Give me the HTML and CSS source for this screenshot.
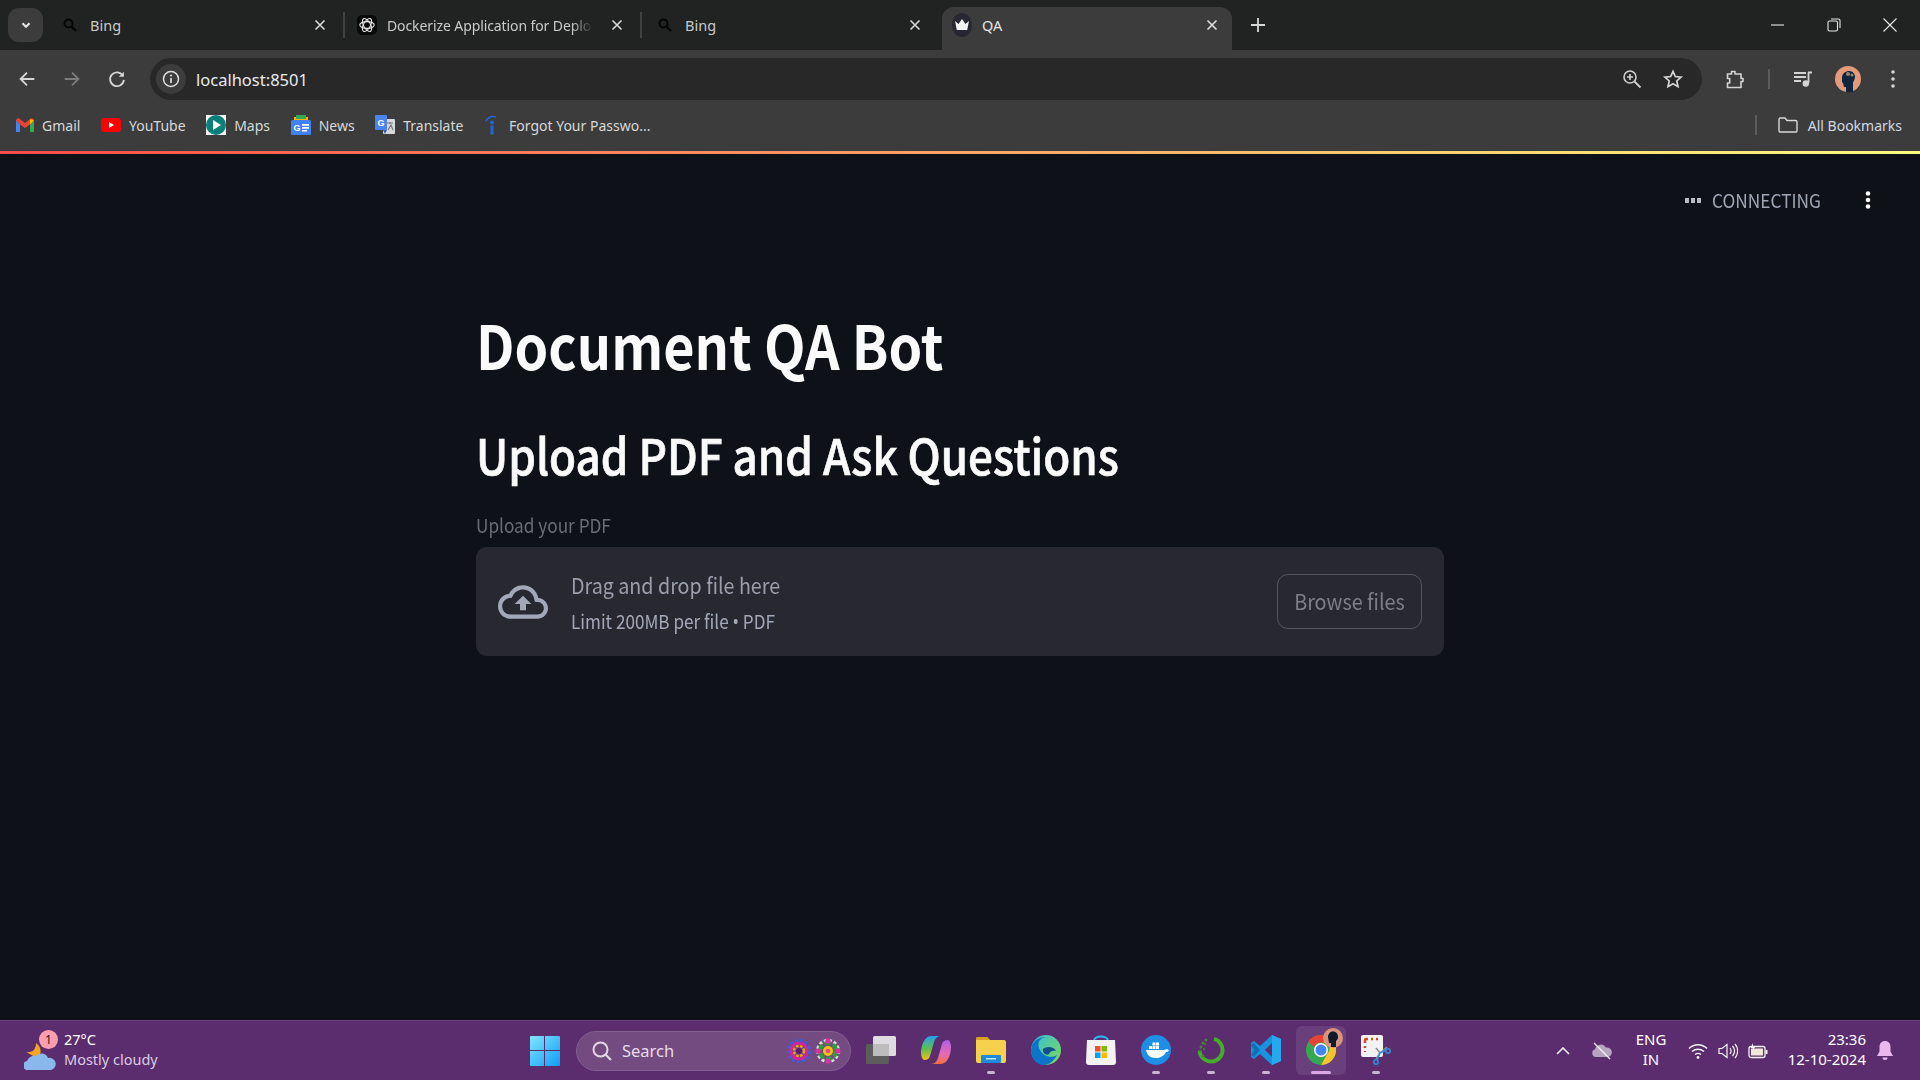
FILE: index.html
```html
<!DOCTYPE html>
<html lang="en">
<head>
<meta charset="utf-8">
<title>QA</title>
<link rel="stylesheet" href="styles.css">
</head>
<body>
<header class="chrome">
  <div class="tabstrip">
    <button class="tab-search"><svg width="14" height="14" viewBox="0 0 24 24"><path d="M6 9l6 6 6-6" fill="none" stroke="#e8e8e8" stroke-width="3.4"/></svg></button>
    <div class="tab tab-sep">
      <svg class="fav" viewBox="0 0 16 16"><circle cx="6.500" cy="6.500" r="4" fill="none" stroke="#050505" stroke-width="2"/><path d="M9.500 9.500l4.500 4.500" stroke="#050505" stroke-width="2.200"/></svg>
      <span class="tab-title">Bing</span>
      <svg class="tab-x" viewBox="0 0 12 12"><path d="M1.500 1.500l9 9M10.500 1.500l-9 9" stroke="#d8d8d8" stroke-width="1.600"/></svg>
    </div>
    <div class="tab tab-sep">
      <svg class="fav fav-ai" viewBox="0 0 20 20"><rect width="20" height="20" rx="5" fill="#0a0a0a"/><g fill="none" stroke="#e8e8e8" stroke-width="1.100"><ellipse cx="10" cy="10" rx="7.200" ry="3.400"/><ellipse cx="10" cy="10" rx="7.200" ry="3.400" transform="rotate(60 10 10)"/><ellipse cx="10" cy="10" rx="7.200" ry="3.400" transform="rotate(120 10 10)"/></g></svg>
      <span class="tab-title tab-fade">Dockerize Application for Deplo</span>
      <svg class="tab-x" viewBox="0 0 12 12"><path d="M1.500 1.500l9 9M10.500 1.500l-9 9" stroke="#d8d8d8" stroke-width="1.600"/></svg>
    </div>
    <div class="tab tab-third">
      <svg class="fav" viewBox="0 0 16 16"><circle cx="6.500" cy="6.500" r="4" fill="none" stroke="#050505" stroke-width="2"/><path d="M9.500 9.500l4.500 4.500" stroke="#050505" stroke-width="2.200"/></svg>
      <span class="tab-title">Bing</span>
      <svg class="tab-x" viewBox="0 0 12 12"><path d="M1.500 1.500l9 9M10.500 1.500l-9 9" stroke="#d8d8d8" stroke-width="1.600"/></svg>
    </div>
    <div class="tab tab-active">
      <span class="crown"><svg width="16" height="14" viewBox="0 0 16 14"><path d="M1 3l3.500 3L8 1l3.500 5L15 3l-1.800 9H2.800z" fill="#f2f2f2"/></svg></span>
      <span class="tab-title">QA</span>
      <svg class="tab-x" viewBox="0 0 12 12"><path d="M1.500 1.500l9 9M10.500 1.500l-9 9" stroke="#e0e0e0" stroke-width="1.600"/></svg>
    </div>
    <svg class="new-tab" width="14" height="14" viewBox="0 0 14 14"><path d="M7 0v14M0 7h14" stroke="#d8d8d8" stroke-width="1.800"/></svg>
    <div class="win-controls">
      <svg width="14" height="14" viewBox="0 0 14 14"><path d="M0 7h13" stroke="#e8e8e8" stroke-width="1.100"/></svg>
      <svg width="14" height="14" viewBox="0 0 14 14"><rect x="1" y="3" width="9.500" height="10" rx="1.500" fill="none" stroke="#e8e8e8" stroke-width="1.100"/><path d="M4 1h7.500a1.500 1.500 0 0 1 1.500 1.500V10" fill="none" stroke="#e8e8e8" stroke-width="1.100"/></svg>
      <svg width="14" height="14" viewBox="0 0 14 14"><path d="M.5.500l13 13M13.500.500l-13 13" stroke="#e8e8e8" stroke-width="1.100"/></svg>
    </div>
  </div>
  <div class="toolbar">
    <div class="nav-buttons">
      <svg width="22" height="22" viewBox="0 0 24 24"><path d="M20 12H5M12 5l-7 7 7 7" fill="none" stroke="#d6d6d6" stroke-width="2"/></svg>
      <svg width="22" height="22" viewBox="0 0 24 24"><path d="M4 12h15M12 5l7 7-7 7" fill="none" stroke="#7c7c7c" stroke-width="2"/></svg>
      <svg width="22" height="22" viewBox="0 0 24 24"><path d="M18.500 8.500A7.500 7.500 0 1 0 19.500 13" fill="none" stroke="#d6d6d6" stroke-width="2"/><path d="M19.500 4v5.500H14z" fill="#d6d6d6"/></svg>
    </div>
    <div class="omnibox">
      <span class="info-chip"><svg width="18" height="18" viewBox="0 0 18 18"><circle cx="9" cy="9" r="7.500" fill="none" stroke="#e0e0e0" stroke-width="1.500"/><path d="M9 8v5" stroke="#e0e0e0" stroke-width="1.700"/><circle cx="9" cy="5.500" r="1.100" fill="#e0e0e0"/></svg></span>
      <span class="url">localhost:8501</span>
      <svg class="omni-zoom" width="20" height="20" viewBox="0 0 20 20"><circle cx="8" cy="8" r="6" fill="none" stroke="#d0d0d0" stroke-width="1.600"/><path d="M12.500 12.500L18.500 18.500" stroke="#d0d0d0" stroke-width="1.800"/><path d="M8 5v6M5 8h6" stroke="#d0d0d0" stroke-width="1.600"/></svg>
      <svg class="omni-star" width="20" height="20" viewBox="0 0 24 24"><path d="M12 2.800l2.800 6.300 6.900.7-5.200 4.600 1.500 6.800-6-3.500-6 3.500 1.500-6.800-5.200-4.600 6.900-.7z" fill="none" stroke="#d8d8d8" stroke-width="2"/></svg>
    </div>
    <div class="tool-actions">
      <svg class="act-ext" width="20" height="20" viewBox="0 0 20 20"><path d="M2.500 5h4V2.500h3.500V5h6v4.500h2v3h-2V18.500H2.500V14h2.200v-4.500H2.500z" fill="none" stroke="#d4d4d4" stroke-width="1.600" stroke-linejoin="round"/></svg>
      <span class="tool-sep"></span>
      <svg class="act-media" width="20" height="20" viewBox="0 0 20 20"><path d="M1 4h12M1 8h12M1 12h7" stroke="#d4d4d4" stroke-width="1.800"/><path d="M15 3.500h4M15.500 3.500V14" stroke="#d4d4d4" stroke-width="1.800"/><circle cx="12.800" cy="14.500" r="3.200" fill="#d4d4d4"/></svg>
      <svg class="act-avatar" width="26" height="26" viewBox="0 0 26 26"><circle cx="13" cy="13" r="13" fill="#e59a7c"/><path d="M7 12c0-5 4-7 7-7 4 0 6 3 6 6 0 3-2 4-2 6v9H11v-5H9.500c-1 0-1-2-1-3L7 16z" fill="#10263f"/><circle cx="13" cy="8" r="2" fill="#98866f"/><circle cx="17" cy="9" r="1.500" fill="#98866f"/></svg>
      <svg class="act-dots" width="4" height="18" viewBox="0 0 4 18"><circle cx="2" cy="2" r="1.800" fill="#d4d4d4"/><circle cx="2" cy="9" r="1.800" fill="#d4d4d4"/><circle cx="2" cy="16" r="1.800" fill="#d4d4d4"/></svg>
    </div>
  </div>
  <nav class="bookmarks">
    <a class="bm"><svg width="18" height="14" viewBox="0 0 18 14"><path d="M0 2.500V14h4V6.500z" fill="#4285f4"/><path d="M14 14h4V2.500L14 6.500z" fill="#34a853"/><path d="M0 2.500C0 .5 2 -.5 3.500 .7L9 5l5.500-4.300C16 -.5 18 .5 18 2.500L14 6.500 9 10 4 6.500z" fill="#ea4335"/><path d="M14 .9l4 1.600L14 6.500z" fill="#fbbc04"/></svg>Gmail</a>
    <a class="bm"><svg width="20" height="14" viewBox="0 0 20 14"><rect width="20" height="14" rx="3.500" fill="#f00"/><path d="M8 4l5 3-5 3z" fill="#fff"/></svg>YouTube</a>
    <a class="bm"><svg width="20" height="20" viewBox="0 0 20 20"><rect width="20" height="20" fill="#f2f2f2"/><circle cx="10" cy="10" r="10" fill="#0b8079"/><path d="M7 5l8 5-8 5z" fill="#fff"/></svg>Maps</a>
    <a class="bm"><svg width="20" height="20" viewBox="0 0 20 20"><path d="M3 2h14v6H3z" fill="#f5b400"/><path d="M5 0h10v4H5z" fill="#34a853"/><rect y="5" width="20" height="15" rx="1.500" fill="#3f82f0"/><text x="2.500" y="16" class="bm-mini">G</text><path d="M11 9h7v1.800h-7zM11 12h7v1.800h-7zM11 15h5v1.500h-5z" fill="#fff"/></svg>News</a>
    <a class="bm"><svg width="20" height="20" viewBox="0 0 20 20"><rect x="8" y="4" width="12" height="15" rx="1" fill="#d8d8d8"/><rect width="12" height="15" rx="1" fill="#4a85ee"/><path d="M8 15l2 4 2-4z" fill="#2a5fc0"/><text x="2.500" y="11" class="bm-mini">G</text><path d="M12 8h6M15 7v2M13 15l3-5 2 5" fill="none" stroke="#777" stroke-width="1.200"/></svg>Translate</a>
    <a class="bm bm-forgot"><svg width="16" height="20" viewBox="0 0 16 20"><path d="M2 6c2-4 6-5 10-4" fill="none" stroke="#1f66d8" stroke-width="1.500"/><circle cx="8" cy="7.500" r="2" fill="#1f66d8"/><rect x="6.500" y="10.500" width="3" height="9" fill="#1f66d8"/></svg>Forgot Your Passwo...</a>
    <span class="bm-sep"></span>
    <a class="bm bm-all"><svg width="20" height="16" viewBox="0 0 20 16"><path d="M1 2.500A1.500 1.500 0 0 1 2.500 1H7l2 2.500h8.500A1.500 1.500 0 0 1 19 5v9a1 1 0 0 1-1 1H2a1 1 0 0 1-1-1z" fill="none" stroke="#d8d8d8" stroke-width="1.400"/></svg>All Bookmarks</a>
  </nav>
  <div class="decoration"></div>
</header>

<main class="app">
  <div class="status-bar">
    <svg class="status-dots" width="16" height="5" viewBox="0 0 16 5"><rect width="4" height="5" fill="#b9bcc4"/><rect x="6" width="4" height="5" fill="#b9bcc4"/><rect x="12" width="4" height="5" fill="#b9bcc4"/></svg>
    <span class="status-text">CONNECTING</span>
    <svg class="status-menu" width="6" height="18" viewBox="0 0 6 18"><circle cx="3" cy="2.500" r="2.300" fill="#fafafa"/><circle cx="3" cy="9" r="2.300" fill="#fafafa"/><circle cx="3" cy="15.500" r="2.300" fill="#fafafa"/></svg>
  </div>
  <section class="content">
    <h1>Document QA Bot</h1>
    <h2>Upload PDF and Ask Questions</h2>
    <label class="upload-label">Upload your PDF</label>
    <div class="dropzone">
      <svg class="cloud" width="50" height="50" viewBox="0 0 24 24"><path fill="#a3a8b8" d="M19.350 10.040C18.670 6.590 15.640 4 12 4 9.110 4 6.600 5.640 5.350 8.040 2.340 8.360 0 10.910 0 14c0 3.310 2.690 6 6 6h13c2.760 0 5-2.240 5-5 0-2.640-2.050-4.780-4.650-4.960zM19 18H6c-2.210 0-4-1.790-4-4 0-2.050 1.530-3.760 3.560-3.970l1.070-.11.5-.95C8.080 7.140 9.940 6 12 6c2.620 0 4.880 1.860 5.390 4.430l.3 1.500 1.530.11c1.560.1 2.780 1.410 2.780 2.960 0 1.650-1.350 3-3 3zM8 13h2.550v3h2.900v-3H16l-4-4z"/></svg>
      <div class="drop-text">
        <span class="drop-main">Drag and drop file here</span>
        <small class="drop-limit">Limit 200MB per file <span class="bullet">•</span> PDF</small>
      </div>
      <button class="browse"><span class="browse-label">Browse files</span></button>
    </div>
  </section>
</main>

<footer class="taskbar">
  <div class="weather">
    <span class="weather-icon">
      <svg width="32" height="34" viewBox="0 0 32 34"><path d="M2 16c6 1 10-2 10-9 6 4 6 12 1 15z" fill="#f4a623"/><path d="M4 34a4.500 4.500 0 0 1-1-9 8 8 0 0 1 9-5 7 7 0 0 1 12 2 6 6 0 0 1 3 12z" fill="#8ab8ec"/></svg>
      <span class="weather-badge">1</span>
    </span>
    <div class="weather-text"><span class="temp">27°C</span><span class="sky">Mostly cloudy</span></div>
  </div>
  <div class="apps">
    <svg class="start" width="30" height="30" viewBox="0 0 30 30"><defs><linearGradient id="w" x1="0" y1="0" x2="1" y2="1"><stop offset="0" stop-color="#7fe6ff"/><stop offset="1" stop-color="#0f9cf5"/></linearGradient></defs><path fill="url(#w)" d="M1 0h13v14H0V1a1 1 0 0 1 1-1zM15 0h14a1 1 0 0 1 1 1v13H15zM0 15h14v15H1a1 1 0 0 1-1-1zM15 15h15v14a1 1 0 0 1-1 1H15z"/></svg>
    <div class="searchbox">
      <svg width="22" height="22" viewBox="0 0 22 22"><circle cx="9.500" cy="9.500" r="7" fill="none" stroke="#e2d6e6" stroke-width="2"/><path d="M14.500 14.500l5.500 5.500" stroke="#e2d6e6" stroke-width="2.200"/></svg>
      <span class="search-text">Search</span>
      <svg class="mandala" width="56" height="28" viewBox="0 0 56 28"><g fill="none"><circle cx="13" cy="14" r="10.500" stroke="#3a5fe0" stroke-width="3" stroke-dasharray="3 2"/><circle cx="13" cy="14" r="8" stroke="#d0259c" stroke-width="3"/><circle cx="13" cy="14" r="5" stroke="#f5a800" stroke-width="2.400" stroke-dasharray="2.500 1.500"/></g><circle cx="13" cy="14" r="3" fill="#5a1a7a"/><circle cx="42" cy="14" r="10.500" fill="none" stroke="#dcdcdc" stroke-width="3" stroke-dasharray="3 2"/><circle cx="42" cy="14" r="8" fill="none" stroke="#2f9e3a" stroke-width="4" stroke-dasharray="6 2.500"/><circle cx="42" cy="4" r="2.600" fill="#e02ca8"/><circle cx="42" cy="24" r="2.600" fill="#e02ca8"/><circle cx="32" cy="14" r="2.600" fill="#e02ca8"/><circle cx="52" cy="14" r="2.600" fill="#e02ca8"/><circle cx="42" cy="14" r="5" fill="#f5c400"/><circle cx="42" cy="14" r="2.300" fill="#e8409a"/></svg>
    </div>
    <div class="app-cell">
      <svg width="30" height="28" viewBox="0 0 30 28"><rect y="8" width="23" height="20" rx="1.500" fill="#5d5d5d"/><rect x="7" width="23" height="20" rx="1.500" fill="#e9e9e9" fill-opacity=".93"/><rect x="7" y="8" width="16" height="12" fill="#bdbdbd"/></svg>
    </div>
    <div class="app-cell">
      <svg width="30" height="30" viewBox="0 0 30 30"><defs><linearGradient id="c1" x1="0" y1="0" x2="0" y2="1"><stop offset="0" stop-color="#27a0f0"/><stop offset=".55" stop-color="#5fc04a"/><stop offset="1" stop-color="#f5c020"/></linearGradient><linearGradient id="c2" x1="0" y1="0" x2="0" y2="1"><stop offset="0" stop-color="#b05fe8"/><stop offset=".6" stop-color="#e86bb0"/><stop offset="1" stop-color="#f5703a"/></linearGradient></defs><path d="M10 1h10c-4 0-6 3-7 6l-4 14c-1 3-3 4-6 4-2-1-3-4-3-7C0 10 4 1 10 1z" fill="url(#c1)"/><path d="M20 29H10c4 0 6-3 7-6l4-14c1-3 3-4 6-4 2 1 3 4 3 7 0 8-4 17-10 17z" fill="url(#c2)"/></svg>
    </div>
    <div class="app-cell app-on">
      <svg width="30" height="27" viewBox="0 0 30 27"><path d="M0 3a2 2 0 0 1 2-2h9l3 3h14a2 2 0 0 1 2 2v19a2 2 0 0 1-2 2H2a2 2 0 0 1-2-2z" fill="#f6d14d"/><path d="M0 3a2 2 0 0 1 2-2h9l3 3H0z" fill="#d6a11f"/><rect x="5" y="19" width="20" height="8" rx="1" fill="#1f8ad6"/><rect x="10" y="22" width="10" height="1.500" fill="#bfe3fb"/></svg>
    </div>
    <div class="app-cell">
      <svg width="30" height="30" viewBox="0 0 30 30"><defs><linearGradient id="e1" x1="0" y1="0" x2="1" y2="1"><stop offset="0" stop-color="#35c0d8"/><stop offset="1" stop-color="#7ed957"/></linearGradient></defs><circle cx="15" cy="15" r="15" fill="url(#e1)"/><path d="M0 16C0 6 8 2 15 2c-8 1-9 8-6 13 3 6 11 9 17 5-3 6-8 10-13 10C6 30 0 24 0 16z" fill="#0e74c8"/><path d="M12 14c3-3 11-3 13 2-3-1-6 0-7 3-2 2-7-1-6-5z" fill="#12508f"/></svg>
    </div>
    <div class="app-cell">
      <svg width="30" height="30" viewBox="0 0 30 30"><path d="M8 6c0-6 14-6 14 0" fill="none" stroke="#2fb8ee" stroke-width="2"/><path d="M1 5h28l1 22a3 3 0 0 1-3 3H3a3 3 0 0 1-3-3z" fill="#f4f2f2"/><rect x="9" y="11" width="5.500" height="5.500" fill="#f25022"/><rect x="15.500" y="11" width="5.500" height="5.500" fill="#7fba00"/><rect x="9" y="17.500" width="5.500" height="5.500" fill="#00a4ef"/><rect x="15.500" y="17.500" width="5.500" height="5.500" fill="#ffb900"/></svg>
    </div>
    <div class="app-cell app-on">
      <svg width="30" height="30" viewBox="0 0 30 30"><circle cx="15" cy="15" r="15" fill="#1d8fe6"/><path d="M5 15h18c1 0 2-1 3-1 1 1 2 1 2 1-1 2-2 2-3 2-2 4-6 6-10 6-6 0-9-3-10-8z" fill="#fff"/><path d="M8 11h3v3H8zM11.500 11h3v3h-3zM15 11h3v3h-3zM11.500 7.500h3v3h-3zM15 7.500h3v3h-3z" fill="#fff"/></svg>
    </div>
    <div class="app-cell app-on">
      <svg width="28" height="28" viewBox="0 0 28 28"><circle cx="14" cy="14" r="11.500" fill="none" stroke="#45ad2a" stroke-width="4" stroke-dasharray="50 22" transform="rotate(-75 14 14)"/><g fill="#3a8c2a"><circle cx="4" cy="11" r="1.500"/><circle cx="3" cy="15" r="1.500"/><circle cx="6" cy="7" r="1.500"/><circle cx="6" cy="20" r="1.500"/><circle cx="9" cy="4" r="1.500"/><circle cx="7" cy="13" r="1"/><circle cx="8" cy="8" r="1"/></g></svg>
    </div>
    <div class="app-cell app-on">
      <svg width="30" height="30" viewBox="0 0 30 30"><path d="M21 0l9 4v22l-9 4-12-11-6 5-3-2v-14l3-2 6 5z" fill="#1a93df"/><path d="M3 8l6 7-6 7-3-2 3-5-3-5z" fill="#0e6fb4"/><path d="M21 0l9 4v22l-9 4z" fill="#26a8ef"/><path d="M21 8l-7 7 7 7z" fill="#5d2d6f"/></svg>
    </div>
    <div class="app-cell app-active">
      <span class="chrome-wrap">
        <svg width="30" height="30" viewBox="0 0 30 30"><circle cx="15" cy="15" r="15" fill="#34a853"/><path d="M15 0a15 15 0 0 1 13 7.500H15a7.500 7.500 0 0 0-7 5L2.500 6.500A15 15 0 0 1 15 0z" fill="#ea4335"/><path d="M28 7.500A15 15 0 0 1 15 30l6.500-11.500A7.500 7.500 0 0 0 21 7.500z" fill="#fbc02d"/><circle cx="15" cy="15" r="7" fill="#fff"/><circle cx="15" cy="15" r="5.500" fill="#4285f4"/></svg>
        <svg class="chrome-badge" width="20" height="20" viewBox="0 0 20 20"><circle cx="10" cy="10" r="10" fill="#d9947a"/><path d="M5 9c0-3.500 2.500-5.500 5-5.500 3.500 0 5 2.500 5 5.500 0 2-1 3-2 4v6H8v-4H6z" fill="#0e1b2c"/></svg>
      </span>
    </div>
    <div class="app-cell app-on">
      <svg width="30" height="30" viewBox="0 0 30 30"><rect width="22" height="22" rx="2" fill="#f2f2f2"/><path d="M4 8V5a1 1 0 0 1 1-1h2M10 4h2M15 4h2M4 11v2M4 16v1" fill="none" stroke="#d84a20" stroke-width="2.400"/><path d="M15 13l4 5 7-6M15 24l4-6" fill="none" stroke="#8a8a8a" stroke-width="1.500"/><circle cx="27" cy="16" r="2.200" fill="none" stroke="#2f8fdc" stroke-width="1.500"/><circle cx="15" cy="27" r="2.200" fill="none" stroke="#2f8fdc" stroke-width="1.500"/><path d="M19 18l6-3M19 18l-3 7" stroke="#2f8fdc" stroke-width="1.500"/></svg>
    </div>
  </div>
  <div class="tray">
    <span class="tray-cell tray-chev"><svg width="14" height="8" viewBox="0 0 14 8"><path d="M1 7l6-6 6 6" fill="none" stroke="#f2f2f2" stroke-width="1.600"/></svg></span>
    <span class="tray-cell tray-drive"><svg width="22" height="18" viewBox="0 0 22 18"><path d="M5 15a4 4 0 0 1-1-7.800 6 6 0 0 1 11-1.700A4.500 4.500 0 0 1 17 15z" fill="#b7a4c1"/><path d="M3 1l16 16" stroke="#f2f2f2" stroke-width="1.200"/></svg></span>
    <span class="tray-lang"><span>ENG</span><span>IN</span></span>
    <span class="tray-cell"><svg width="20" height="16" viewBox="0 0 20 16"><path d="M1 5.500c5-5 13-5 18 0M4 8.500c3.500-3 8.500-3 12 0M7 11.500c2-1.500 4-1.500 6 0" fill="none" stroke="#f4f4f4" stroke-width="1.400"/><circle cx="10" cy="14.500" r="1.400" fill="#f4f4f4"/></svg></span>
    <span class="tray-cell"><svg width="20" height="16" viewBox="0 0 20 16"><path d="M1 5.500h3l5-4v13l-5-4H1z" fill="none" stroke="#f4f4f4" stroke-width="1.200"/><path d="M12 5c1.500 2 1.500 4 0 6M14.500 3c2.500 3 2.500 7 0 10M17 1c3.500 4 3.500 10 0 14" fill="none" stroke="#f4f4f4" stroke-width="1.200"/></svg></span>
    <span class="tray-cell"><svg width="20" height="16" viewBox="0 0 20 16"><rect x="1" y="3.500" width="16" height="11" rx="2" fill="#5d2d6f" stroke="#f4f4f4" stroke-width="1.300"/><rect x="3" y="5.500" width="12" height="7" fill="#f0e8d8"/><rect x="17.500" y="7" width="2" height="4" fill="#f4f4f4"/><path d="M5 0L2.500 5H5L4 8l3.500-4.500H5z" fill="#f4f4f4"/></svg></span>
    <span class="clock"><span>23:36</span><span>12-10-2024</span></span>
    <svg class="bell" width="16" height="20" viewBox="0 0 16 20"><path d="M8 0c3.500 0 5.500 2.500 5.500 6v4.500L16 15H0l2.500-4.500V6C2.500 2.500 4.500 0 8 0z" fill="#eab8ef"/><path d="M5.500 16.500h5a2.500 2.500 0 0 1-5 0z" fill="#eab8ef"/></svg>
  </div>
</footer>
</body>
</html>
```
FILE: styles.css
```css
* { box-sizing: border-box; }
html, body { margin: 0; height: 100%; }
body {
  height: 100vh;
  overflow: hidden;
  display: flex;
  flex-direction: column;
  background: #0e1117;
  font-family: "Noto Sans", "Open Sans", sans-serif;
}

/* browser chrome */
.chrome { flex: none; background: #3c3c3c; }
.tabstrip {
  height: 50px;
  background: #202322;
  display: flex;
  align-items: flex-start;
  padding-left: 8px;
  padding-top: 7px;
}
.tab-search {
  width: 35px;
  height: 34px;
  margin-top: 1px;
  margin-right: 5px;
  border: 0;
  border-radius: 11px;
  background: #3c3c3c;
  display: flex;
  align-items: center;
  justify-content: center;
  padding: 0;
}
.tab {
  width: 297px;
  height: 36px;
  padding-left: 14px;
  display: flex;
  align-items: center;
  position: relative;
}
.tab-sep { border-right: 2px solid #3f4242; height: 26px; margin-top: 5px; }
.tab-third { width: 300px; padding-left: 15px; margin-top: 3px; height: 30px; }
.tab-active {
  width: 290px;
  height: 43px;
  padding: 0 0 7px 10px;
  background: #3c3c3c;
  border-radius: 12px 12px 0 0;
}
.fav { width: 16px; height: 16px; flex: none; margin-right: 12px; }
.fav-ai { width: 20px; height: 20px; margin-left: -2px; margin-right: 10px; }
.tab-title {
  font-size: 14.5px;
  color: #c9cbca;
  white-space: nowrap;
  flex: none;
  width: 222px;
}
.tab-fade {
  width: 210px;
  font-size: 14px;
  letter-spacing: -.1px;
  -webkit-mask-image: linear-gradient(90deg, #000 88%, transparent 98%);
  mask-image: linear-gradient(90deg, #000 88%, transparent 98%);
}
.tab-active .tab-title { color: #e6e6e6; width: 222px; }
.tab-x { width: 12px; height: 12px; flex: none; margin-left: 2px; }
.tab-fade + .tab-x { margin-left: 14px; }
.crown {
  width: 20px;
  height: 24px;
  border-radius: 50%;
  background: #262730;
  flex: none;
  margin-right: 10px;
  display: flex;
  align-items: center;
  justify-content: center;
}
.new-tab { margin: 11px 0 0 19px; flex: none; }
.win-controls {
  margin-left: auto;
  display: flex;
  gap: 42px;
  padding-right: 23px;
  margin-top: 11px;
}

.toolbar {
  height: 50px;
  padding: 8px 0 0;
  display: flex;
  align-items: flex-start;
  border-radius: 12px 12px 0 0;
}
.nav-buttons {
  width: 150px;
  height: 42px;
  display: flex;
  align-items: center;
  gap: 23px;
  padding-left: 16px;
  flex: none;
}
.omnibox {
  width: 1552px;
  height: 42px;
  border-radius: 21px;
  background: #282828;
  flex: none;
  display: flex;
  align-items: center;
  padding-left: 6px;
}
.info-chip {
  width: 30px;
  height: 30px;
  border-radius: 50%;
  background: #3c3c3c;
  display: flex;
  align-items: center;
  justify-content: center;
  flex: none;
}
.url { margin-left: 10px; font-size: 16.5px; color: #e8eaed; }
.omni-zoom { margin-left: auto; margin-right: 21px; }
.omni-star { margin-right: 19px; }
.tool-actions {
  flex: 1;
  height: 42px;
  display: flex;
  align-items: center;
  padding-left: 23px;
}
.tool-sep { width: 2px; height: 20px; background: #5b5b5b; margin: 0 23px 0 23px; }
.act-avatar { margin-left: 22px; }
.act-dots { margin-left: 30px; }

.bookmarks {
  height: 51px;
  display: flex;
  align-items: center;
  padding: 0 18px 1px 16px;
  gap: 20.600px;
}
.bm {
  display: flex;
  align-items: center;
  gap: 8px;
  font-size: 14px;
  color: #d7d9d9;
  white-space: nowrap;
}
.bm svg { flex: none; }
.bm-forgot { gap: 9px; }
.bm-mini { font-family: "Liberation Sans", sans-serif; font-size: 9px; font-weight: 700; fill: #fff; }
.bm-sep { width: 2px; height: 20px; background: #5a5a5a; margin-left: auto; margin-right: 0; }
.bm-all { color: #cfd8e6; gap: 10px; }
.decoration {
  height: 3px;
  background: linear-gradient(90deg, #ff4b4b, #fffd80);
}

/* page */
.app {
  flex: 1;
  min-height: 0;
  position: relative;
  font-family: "Noto Sans CJK SC", "Noto Sans", sans-serif;
}
.status-bar {
  position: absolute;
  top: 34px;
  right: 49px;
  display: flex;
  align-items: center;
  color: #9ea6b6;
}
.status-dots { margin-right: 11px; }
.status-text {
  width: 109px;
  font-size: 19px;
  line-height: 24px;
  white-space: nowrap;
  transform: scaleX(.91);
  transform-origin: left center;
}
.status-menu { margin-left: 44px; }
.content {
  width: 968px;
  margin: 0 auto;
  padding-top: 154px;
}
h1 {
  margin: 0;
  font-size: 60.5px;
  line-height: 72px;
  font-weight: 700;
  color: #fafafa;
  transform: scaleX(.892);
  transform-origin: left center;
}
h2 {
  margin: 44px 0 0;
  font-size: 49.5px;
  line-height: 60px;
  font-weight: 500;
  -webkit-text-stroke: .7px #fafafa;
  color: #fafafa;
  transform: scaleX(.889);
  transform-origin: left center;
}
.upload-label {
  display: block;
  margin-top: 29px;
  font-size: 19.25px;
  line-height: 25px;
  color: #6a6d74;
  transform: scaleX(.894);
  transform-origin: left center;
}
.dropzone {
  margin-top: 9px;
  height: 109px;
  border-radius: 11px;
  background: #282831;
  display: flex;
  align-items: center;
  padding: 0 22px;
}
.cloud { flex: none; margin-right: 23px; }
.drop-text { display: flex; flex-direction: column; flex: 1; gap: 10px; }
.drop-main {
  font-size: 22px;
  line-height: 30px;
  color: #9a9eab;
  transform: scaleX(.895);
  transform-origin: left center;
}
.drop-limit {
  font-size: 19.25px;
  line-height: 25px;
  color: #a3a8b8;
  transform: scaleX(.89);
  transform-origin: left center;
}
.bullet { font-family: "Noto Sans", sans-serif; }
.browse {
  width: 145px;
  height: 55px;
  border: 1px solid #55565c;
  border-radius: 11px;
  background: transparent;
  color: #7d7f85;
  font: 22px/30px "Noto Sans CJK SC", "Noto Sans", sans-serif;
  padding: 0 0 4px;
  flex: none;
}
.browse-label { display: block; transform: scaleX(.9); white-space: nowrap; }

/* taskbar */
.taskbar {
  flex: none;
  height: 60px;
  background: #5b2d6f;
  border-top: 1px solid #6c4480;
  display: grid;
  grid-template-columns: 530px auto 1fr;
  align-items: center;
  color: #fff;
}
.weather { display: flex; align-items: center; padding-left: 24px; }
.weather-icon { position: relative; width: 32px; height: 38px; margin-right: 8px; display: flex; align-items: flex-end; }
.weather-badge {
  position: absolute;
  top: -2px;
  left: 15px;
  width: 19px;
  height: 19px;
  border-radius: 50%;
  background: #ff9eb0;
  color: #1a1a1a;
  font-size: 12px;
  line-height: 19px;
  text-align: center;
}
.weather-text { display: flex; flex-direction: column; line-height: 20px; margin-top: -4px; }
.temp { font-size: 14.5px; }
.sky { font-size: 14.5px; color: #dccbe3; }
.apps { display: flex; align-items: center; height: 59px; }
.start { flex: none; }
.searchbox {
  width: 275px;
  height: 40px;
  margin-left: 16px;
  margin-right: 2px;
  border-radius: 20px;
  background: #734b81;
  border: 1px solid #81608f;
  display: flex;
  align-items: center;
  padding-left: 14px;
}
.search-text { margin-left: 9px; font-size: 16.5px; color: #e6dcea; }
.mandala { margin-left: auto; margin-right: 8px; }
.app-cell {
  width: 55px;
  height: 59px;
  display: flex;
  align-items: center;
  justify-content: center;
  position: relative;
  padding-bottom: 2px;
}
.app-on::after, .app-active::after {
  content: "";
  position: absolute;
  bottom: 6px;
  left: 23.500px;
  width: 8px;
  height: 3px;
  border-radius: 2px;
  background: #c9b3d2;
}
.app-active::before {
  content: "";
  position: absolute;
  top: 5px;
  left: 2.500px;
  width: 50px;
  height: 49px;
  border-radius: 6px;
  background: rgba(255, 255, 255, .09);
}
.app-active::after { left: 17.500px; width: 20px; background: #dba6e6; }
.chrome-wrap { position: relative; display: flex; }
.chrome-badge { position: absolute; top: -7px; right: -7px; }
.tray { display: flex; align-items: center; padding-left: 145px; }
.tray-cell { width: 30px; display: flex; align-items: center; justify-content: center; flex: none; }
.tray-chev { margin-right: 9px; }
.tray-drive { margin-right: 9px; }
.tray-lang {
  width: 50px;
  margin-right: 7px;
  display: flex;
  flex-direction: column;
  align-items: center;
  font-size: 15px;
  line-height: 20px;
  margin-top: -3px;
}
.clock {
  width: 93px;
  display: flex;
  flex-direction: column;
  align-items: flex-end;
  font-size: 15px;
  line-height: 20px;
  margin-top: -3px;
}
.bell { margin-left: 11px; }
```
